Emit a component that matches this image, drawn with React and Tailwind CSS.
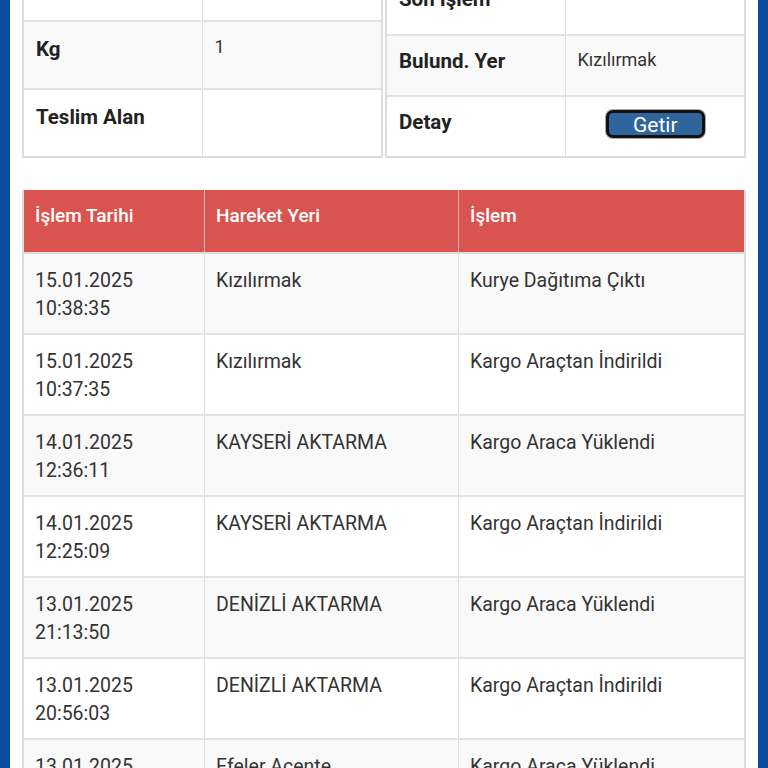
import React from "react";

const font = { fontFamily: "Roboto, 'Noto Sans', sans-serif" };

const leftRows = [
  { label: "Desi", value: "1", bg: "bg-white" },
  { label: "Kg", value: "1", bg: "bg-[#f9f9f9]" },
  { label: "Teslim Alan", value: "", bg: "bg-white" },
];

const moves = [
  ["15.01.2025", "10:38:35", "Kızılırmak", "Kurye Dağıtıma Çıktı"],
  ["15.01.2025", "10:37:35", "Kızılırmak", "Kargo Araçtan İndirildi"],
  ["14.01.2025", "12:36:11", "KAYSERİ AKTARMA", "Kargo Araca Yüklendi"],
  ["14.01.2025", "12:25:09", "KAYSERİ AKTARMA", "Kargo Araçtan İndirildi"],
  ["13.01.2025", "21:13:50", "DENİZLİ AKTARMA", "Kargo Araca Yüklendi"],
  ["13.01.2025", "20:56:03", "DENİZLİ AKTARMA", "Kargo Araçtan İndirildi"],
  ["13.01.2025", "20:12:44", "Efeler Acente", "Kargo Araca Yüklendi"],
];

export default function App() {
  return (
    <div className="w-full h-[768px] overflow-hidden bg-[#0b4b9b] px-[10px] text-[#333]" style={font}>
      <div className="h-full flex flex-col bg-white px-3 overflow-hidden">
        {/* top info tables */}
        <div className="flex items-end gap-[2px] -mt-[48px] shrink-0">
          <div className="w-1/2 border-2 border-[#ddd] border-t-0">
            {leftRows.map((r, i) => (
              <div key={i} className={`flex h-[68px] ${r.bg} ${i > 0 ? "border-t-2 border-[#e3e3e3]" : ""}`}>
                <div className="w-1/2 border-r border-[#ddd] pl-[12px] pt-[13px] text-[20.5px] leading-[28px] font-bold text-[#222]">
                  {r.label}
                </div>
                <div className="w-1/2 pl-[12px] pt-[11px] text-[18px] leading-[28px]">{r.value}</div>
              </div>
            ))}
          </div>
          <div className="w-1/2 border-2 border-[#ddd] border-t-0">
            <div className="flex h-[61px] bg-white">
              <div className="w-1/2 border-r border-[#ddd] pl-[12px] pt-[12px] text-[20.5px] leading-[28px] font-bold text-[#222]">
                Son İşlem
              </div>
              <div className="w-1/2"></div>
            </div>
            <div className="flex h-[61px] bg-[#f9f9f9] border-t-2 border-[#e3e3e3]">
              <div className="w-1/2 border-r border-[#ddd] pl-[12px] pt-[11px] text-[20.5px] leading-[28px] font-bold text-[#222]">
                Bulund. Yer
              </div>
              <div className="w-1/2 pl-[12px] pt-[10px] text-[18px] leading-[28px]">Kızılırmak</div>
            </div>
            <div className="flex h-[61px] bg-white border-t-2 border-[#e3e3e3]">
              <div className="w-1/2 border-r border-[#ddd] pl-[12px] pt-[11px] text-[20.5px] leading-[28px] font-bold text-[#222]">
                Detay
              </div>
              <div className="w-1/2 flex justify-center pt-[13px] pl-[1px]">
                <button className="w-[99px] h-[28px] rounded-[7px] border-[3px] border-[#111] bg-[#2f659c] ring-1 ring-[#aaa] text-white text-[21px] leading-[24px] overflow-hidden">
                  Getir
                </button>
              </div>
            </div>
          </div>
        </div>

        {/* movement history */}
        <div className="mt-[32px] border-x-2 border-[#ddd] shrink-0">
          <div className="grid grid-cols-[181px_254px_1fr] h-[64px] bg-[#d9534f] border-b-2 border-[#ddd] text-white text-[19px] font-medium">
            <div className="pl-[11px] pt-[12px] leading-[28px] border-r border-[#f0b0ae]">İşlem Tarihi</div>
            <div className="pl-[11px] pt-[12px] leading-[28px] border-r border-[#f0b0ae]">Hareket Yeri</div>
            <div className="pl-[11px] pt-[12px] leading-[28px]">İşlem</div>
          </div>
          {moves.map((m, i) => (
            <div
              key={i}
              className={`grid grid-cols-[181px_254px_1fr] h-[81px] border-b-2 border-[#e3e3e3] text-[19.5px] leading-[28px] ${
                i % 2 === 0 ? "bg-[#f9f9f9]" : "bg-white"
              }`}
            >
              <div className="pl-[11px] pt-[13px] border-r border-[#ddd]">
                {m[0]}
                <br />
                {m[1]}
              </div>
              <div className="pl-[11px] pt-[13px] border-r border-[#ddd]">{m[2]}</div>
              <div className="pl-[11px] pt-[13px]">{m[3]}</div>
            </div>
          ))}
        </div>
      </div>
    </div>
  );
}
